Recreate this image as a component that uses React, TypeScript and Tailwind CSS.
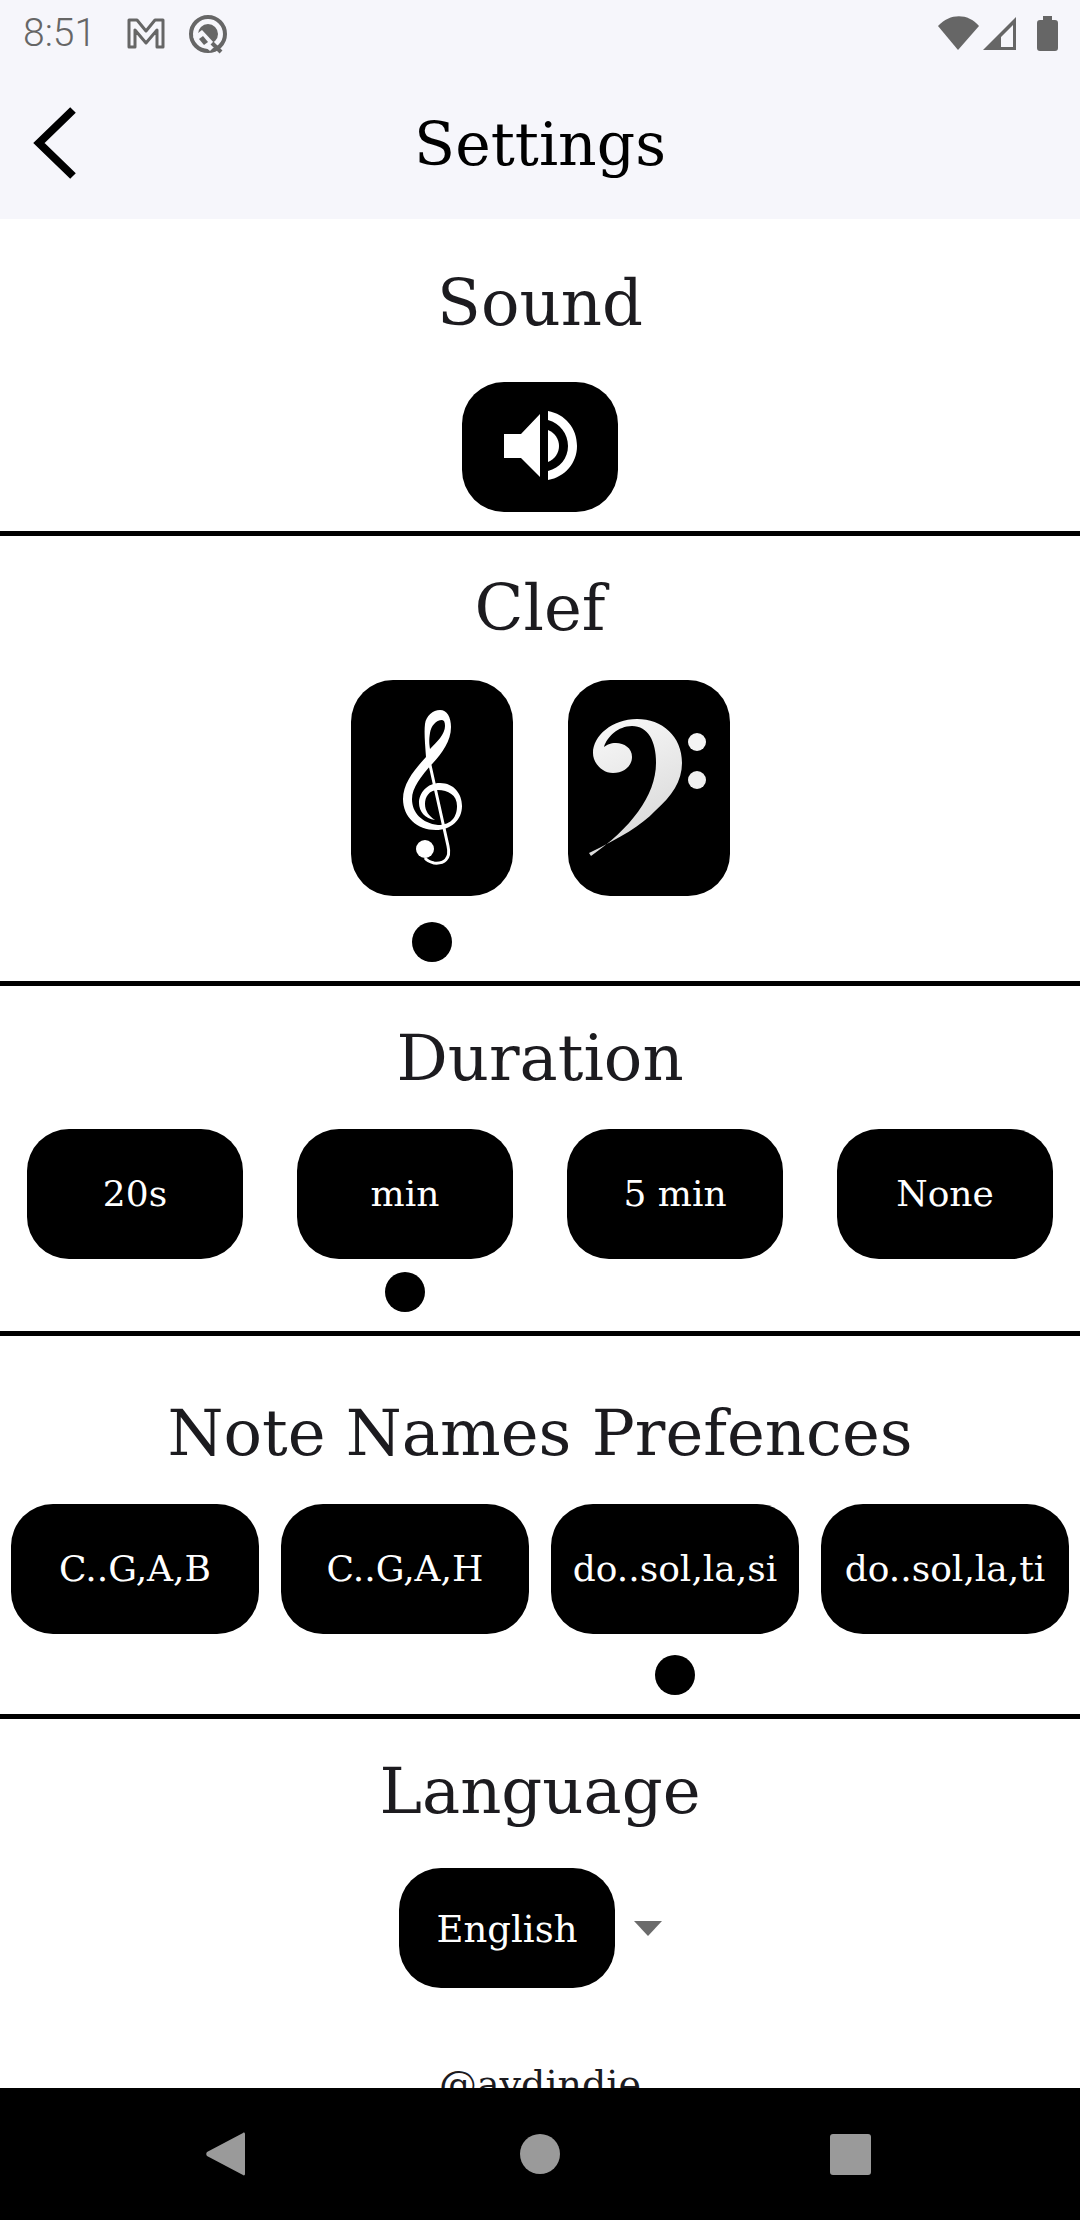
const slab = "font-['DejaVu_Serif',serif]";

function Title({ children }: { children: string }) {
  return (
    <h2 className={`${slab} h-[88px] text-center text-[64px] leading-[88px] text-[#1c1b1f] whitespace-nowrap`}>
      {children}
    </h2>
  );
}

function Dot({ on }: { on: boolean }) {
  return <div className={on ? "h-10 w-10 rounded-full bg-black" : "h-10 w-10"} />;
}

function TextButton({ label, width }: { label: string; width: string }) {
  return (
    <div className={`${width} flex h-[130px] items-center justify-center rounded-[42px] bg-black text-[36px] text-white whitespace-nowrap ${slab}`}>
      {label}
    </div>
  );
}

function SpeakerIcon() {
  return (
    <svg viewBox="0 0 156 130" className="h-full w-full">
      <g transform="translate(28 18)" fill="#fff">
        <path d="M14 34H31L50 14V77L31 58H14Z" />
        <path d="M58 30C65 33 69 39 69 46C69 53 65 59 58 62Z" />
        <path d="M58 11C75 14 87 28 87 46C87 63 75 77 58 80V71C70 68 78 58 78 46C78 34 70 23 58 20Z" />
      </g>
    </svg>
  );
}

function TrebleClef() {
  return (
    <svg viewBox="-29 -11 162 216" className="h-full w-full">
      <path
        fill="#fff"
        fillRule="evenodd"
        d="M60 19C67 19 71 26 71 36C71 50 62 62 53 72C41 85 32 97 32 108C32 122 42 132 58 134C72 134 77 125 77 115C77 104 68 99 58 99C49 99 45 106 45 113C45 120 49 125 55 129C45 128 39 120 39 112C39 102 47 92 60 92C74 92 82 103 82 115C82 129 71 139 56 139C37 139 23 126 23 108C23 92 35 78 46 66C45 52 44 41 45 33C46 25 53 19 60 19ZM62 29C56 29 51 35 50 42C49 48 49 52 50 58C57 51 65 43 65 35C65 31 64 29 62 29Z"
      />
      <path d="M50 74L68 155C71 168 64 173 54 172C50 171 47 170 45 167" fill="none" stroke="#fff" strokeWidth="3" />
      <circle cx="45" cy="158" r="9" fill="#fff" />
    </svg>
  );
}

function BassClef() {
  return (
    <svg viewBox="-12 -21 162 216" className="h-full w-full">
      <defs>
        <linearGradient id="bass" x1="0" y1="0" x2="0.3" y2="1">
          <stop offset="0" stopColor="#fafafa" />
          <stop offset="1" stopColor="#d8d8d8" />
        </linearGradient>
      </defs>
      <path
        fill="url(#bass)"
        d="M9 152C40 137 62 124 75 110C92 95 102 80 102 62C102 35 82 18 57 18C32 18 13 35 13 52C13 62 22 72 33 72C44 72 52 65 52 56C52 47 44 42 36 42C30 42 27 44 24 46C27 36 38 25 52 25C68 25 76 40 76 62C76 95 50 128 11 155Z"
      />
      <circle cx="117" cy="41" r="9" fill="#f4f4f4" />
      <circle cx="117" cy="79" r="9" fill="#f0f0f0" />
    </svg>
  );
}

function StatusBar() {
  return (
    <div className="flex h-[66px] items-center justify-between pl-[23px] pr-[10px]">
      <div className="flex items-center">
        <span className="w-[97px] font-['Roboto',sans-serif] text-[39px] font-light leading-none text-[#666]">8:51</span>
        <svg viewBox="0 0 120 55" className="h-[55px] w-[120px]">
          <path d="M9 14H17L26 25L35 14H43V41H37V24L26 37L15 24V41H9Z" fill="none" stroke="#666" strokeWidth="3" strokeLinejoin="round" />
          <g transform="translate(-4 0)">
            <circle cx="92" cy="28" r="17" fill="none" stroke="#666" strokeWidth="4" />
            <circle cx="92" cy="28" r="10" fill="#666" />
            <path d="M77 31L86 24L100 39L94 45Z" fill="#f6f6fb" />
            <path d="M83 33L87 30L92 36L88 39Z" fill="#666" />
            <path d="M96 37L105 46" stroke="#666" strokeWidth="4" />
          </g>
        </svg>
      </div>
      <svg viewBox="0 0 140 55" className="h-[55px] w-[140px]">
        <path d="M8 20C20 7 38 7 49 20L28 44Z" fill="#666" />
        <path fillRule="evenodd" d="M53 44L86 11V44ZM71 41H83V19L71 31Z" fill="#666" />
        <path d="M113 10H122V14H125C127 14 128 15 128 17V42C128 44 127 45 125 45H110C108 45 107 44 107 42V17C107 15 108 14 110 14H113Z" fill="#666" />
      </svg>
    </div>
  );
}

export default function App() {
  return (
    <div className="flex h-[2220px] w-[1080px] flex-col overflow-hidden bg-white">
      <div className="bg-[#f6f6fb]">
        <StatusBar />
        <header className="grid h-[153px] grid-cols-[1fr_auto_1fr] items-center">
          <svg viewBox="0 0 50 80" className="ml-[30px] h-[80px] w-[50px]">
            <path d="M43 7L9 40L43 73" fill="none" stroke="#000" strokeWidth="8" />
          </svg>
          <h1 className={`${slab} pt-[2px] text-[60px] leading-none text-black`}>Settings</h1>
          <div />
        </header>
      </div>

      <main className="flex-1 overflow-hidden">
        <section className="border-b-[5px] border-black pb-[19px] pt-[40px]">
          <Title>Sound</Title>
          <div className="mx-auto mt-[35px] h-[130px] w-[156px] rounded-[42px] bg-black">
            <SpeakerIcon />
          </div>
        </section>

        <section className="border-b-[5px] border-black pb-[19px] pt-[28px]">
          <Title>Clef</Title>
          <div className="mt-[28px] flex justify-center gap-[55px]">
            <div className="flex flex-col items-center gap-[26px]">
              <div className="h-[216px] w-[162px] rounded-[42px] bg-black">
                <TrebleClef />
              </div>
              <Dot on />
            </div>
            <div className="flex flex-col items-center gap-[26px]">
              <div className="h-[216px] w-[162px] rounded-[42px] bg-black">
                <BassClef />
              </div>
              <Dot on={false} />
            </div>
          </div>
        </section>

        <section className="border-b-[5px] border-black pb-[19px] pt-[28px]">
          <Title>Duration</Title>
          <div className="mt-[27px] flex justify-between px-[27px]">
            {["20s", "min", "5 min", "None"].map((label) => (
              <div key={label} className="flex flex-col items-center gap-[13px]">
                <TextButton label={label} width="w-[216px]" />
                <Dot on={label === "min"} />
              </div>
            ))}
          </div>
        </section>

        <section className="border-b-[5px] border-black pb-[19px] pt-[53px]">
          <Title>Note Names Prefences</Title>
          <div className="mt-[27px] flex justify-between px-[11px]">
            {["C..G,A,B", "C..G,A,H", "do..sol,la,si", "do..sol,la,ti"].map((label) => (
              <div key={label} className="flex flex-col items-center gap-[21px]">
                <TextButton label={label} width="w-[248px]" />
                <Dot on={label === "do..sol,la,si"} />
              </div>
            ))}
          </div>
        </section>

        <section className="pt-[28px]">
          <Title>Language</Title>
          <div className="mt-[33px] flex justify-center">
            <div className={`${slab} flex h-[120px] w-[216px] items-center justify-center rounded-[42px] bg-black pt-[3px] text-[37px] text-white`}>
              English
            </div>
            <div className="flex w-[66px] items-center pl-[19px]">
              <div className="h-0 w-0 border-x-[14px] border-t-[15px] border-x-transparent border-t-[#6b6b6b]" />
            </div>
          </div>
          <p className={`${slab} mt-[74px] text-center text-[38px] leading-[44px] text-[#1c1b1f]`}>@aydindie</p>
        </section>
      </main>

      <nav className="flex h-[132px] items-center justify-between bg-black pl-[206px] pr-[209px]">
        <svg viewBox="0 0 39 44" className="h-[44px] w-[39px]">
          <path d="M37 1C38 0 39 1 39 2V42C39 43 38 44 37 43L1 24C0 23 0 21 1 20Z" fill="#9a9a9a" />
        </svg>
        <div className="ml-[5px] h-10 w-10 rounded-full bg-[#9a9a9a]" />
        <div className="h-[41px] w-[41px] rounded-[3px] bg-[#9a9a9a]" />
      </nav>
    </div>
  );
}
